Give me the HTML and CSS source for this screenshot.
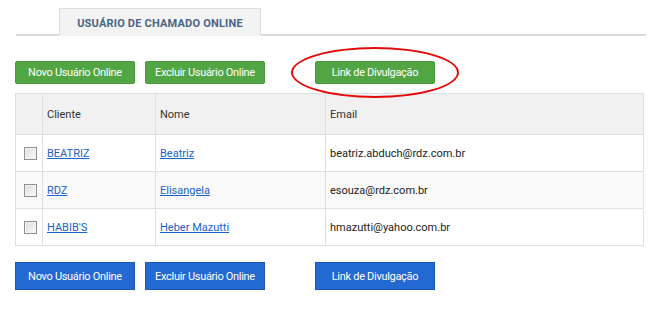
FILE: index.html
```html
<!DOCTYPE html>
<html lang="pt-BR">
  <head>
    <meta charset="UTF-8" />
    <title>Usuário de Chamado Online</title>
    <link rel="stylesheet" href="styles.css">
  </head>
  <body>
    <div class="page">
      <div class="tabs">
        <div class="tab">USUÁRIO DE CHAMADO ONLINE</div>
      </div>

      <div class="actions actions-top">
        <button class="btn btn-green">Novo Usuário Online</button>
        <button class="btn btn-green">Excluir Usuário Online</button>
        <button class="btn btn-green btn-link">Link de Divulgação</button>
        <div class="highlight"></div>
      </div>

      <table class="grid">
        <thead>
          <tr>
            <th class="col-check"></th>
            <th class="col-cliente">Cliente</th>
            <th class="col-nome">Nome</th>
            <th>Email</th>
          </tr>
        </thead>
        <tbody>
          <tr>
            <td class="col-check"><span class="check"></span></td>
            <td><a href="#">BEATRIZ</a></td>
            <td><a href="#">Beatriz</a></td>
            <td>beatriz.abduch@rdz.com.br</td>
          </tr>
          <tr class="alt">
            <td class="col-check"><span class="check"></span></td>
            <td><a href="#">RDZ</a></td>
            <td><a href="#">Elisangela</a></td>
            <td>esouza@rdz.com.br</td>
          </tr>
          <tr>
            <td class="col-check"><span class="check"></span></td>
            <td><a href="#">HABIB'S</a></td>
            <td><a href="#">Heber Mazutti</a></td>
            <td>hmazutti@yahoo.com.br</td>
          </tr>
        </tbody>
      </table>

      <div class="actions actions-bottom">
        <button class="btn btn-blue">Novo Usuário Online</button>
        <button class="btn btn-blue">Excluir Usuário Online</button>
        <button class="btn btn-blue btn-link">Link de Divulgação</button>
      </div>
    </div>
  </body>
</html>
```

FILE: styles.css
```css
* {
  margin: 0;
  padding: 0;
  box-sizing: border-box;
}

body {
  background: #fff;
  font-family: Roboto, 'Liberation Sans', Arial, sans-serif;
  color: #222;
}

.page {
  padding: 8px 0 0 15px;
  width: 646px;
}

/* Abas */
.tabs {
  margin-left: 1px;
  border-bottom: 2px solid #dcdcdc;
  padding-left: 43px;
  display: flex;
}

.tab {
  width: 202px;
  height: 28px;
  background: #f3f3f3;
  border: 1px solid #dcdcdc;
  border-bottom: none;
  margin-bottom: -2px;
  font-size: 11px;
  font-weight: bold;
  color: #4b6585;
  letter-spacing: 0.2px;
  display: flex;
  align-items: center;
  justify-content: center;
  padding-top: 1px;
}

/* Botões */
.actions {
  display: flex;
  gap: 10px;
  position: relative;
}

.actions-top {
  margin-top: 25px;
}

.actions-bottom {
  margin-top: 16px;
}

.btn {
  width: 120px;
  font-family: inherit;
  font-size: 11px;
  letter-spacing: -0.3px;
  color: #fff;
  cursor: pointer;
}

.btn-green {
  height: 23px;
  background: #52a543;
  border: 1px solid #4a9a3c;
  border-radius: 2px;
}

.btn-blue {
  height: 28px;
  background: #2468d2;
  border: 1px solid #1d57b3;
}

.btn-link {
  margin-left: 40px;
}

.highlight {
  position: absolute;
  left: 276px;
  top: -14px;
  width: 168px;
  height: 51px;
  border: 2.5px solid #e30b0b;
  border-radius: 50%;
  pointer-events: none;
}

/* Tabela */
.grid {
  margin-top: 9px;
  width: 629px;
  border-collapse: collapse;
  font-size: 11px;
}

.grid th,
.grid td {
  border: 1px solid #e0e0e0;
  padding: 0 4px;
  text-align: left;
  vertical-align: middle;
}

.grid th {
  height: 41px;
  background: #f1f1f1;
  font-weight: normal;
  color: #333;
}

.grid td {
  height: 37px;
  background: #fff;
}

.grid tr.alt td {
  background: #fafafa;
}

.grid .col-check {
  width: 27px;
  padding: 0 0 0 8px;
}

.grid .col-cliente {
  width: 113px;
}

.grid .col-nome {
  width: 170px;
}

.grid a {
  color: #1b62cc;
  text-decoration: underline;
}

.check {
  display: block;
  width: 13px;
  height: 13px;
  border: 1px solid #8f8f8f;
  background: linear-gradient(135deg, #dcdcdc, #fbfbfb);
  box-shadow: inset 0 0 0 1px #f4f4f4;
}
```
